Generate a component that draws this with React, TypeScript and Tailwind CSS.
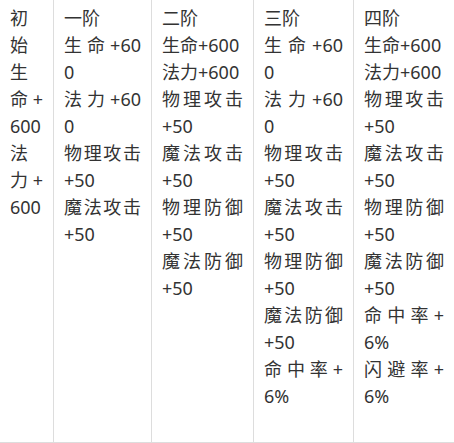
type Line = { text: string; spread?: boolean };

interface Column {
  width: string;
  border: boolean;
  lines: Line[];
}

const j = (text: string): Line => ({ text, spread: true });
const l = (text: string): Line => ({ text });

const columns: Column[] = [
  {
    width: 'w-[54px]',
    border: true,
    lines: [j('初'), j('始'), j('生'), j('命+'), l('600'), j('法'), j('力+'), l('600')],
  },
  {
    width: 'w-[98px]',
    border: true,
    lines: [
      l('一阶'),
      j('生命+60'), l('0'),
      j('法力+60'), l('0'),
      j('物理攻击'), l('+50'),
      j('魔法攻击'), l('+50'),
    ],
  },
  {
    width: 'w-[102px]',
    border: true,
    lines: [
      l('二阶'),
      l('生命+600'),
      l('法力+600'),
      j('物理攻击'), l('+50'),
      j('魔法攻击'), l('+50'),
      j('物理防御'), l('+50'),
      j('魔法防御'), l('+50'),
    ],
  },
  {
    width: 'w-[100px]',
    border: true,
    lines: [
      l('三阶'),
      j('生命+60'), l('0'),
      j('法力+60'), l('0'),
      j('物理攻击'), l('+50'),
      j('魔法攻击'), l('+50'),
      j('物理防御'), l('+50'),
      j('魔法防御'), l('+50'),
      j('命中率+'), l('6%'),
    ],
  },
  {
    width: 'w-[100px]',
    border: false,
    lines: [
      l('四阶'),
      l('生命+600'),
      l('法力+600'),
      j('物理攻击'), l('+50'),
      j('魔法攻击'), l('+50'),
      j('物理防御'), l('+50'),
      j('魔法防御'), l('+50'),
      j('命中率+'), l('6%'),
      j('闪避率+'), l('6%'),
    ],
  },
];

function Cell({ column }: { column: Column }) {
  return (
    <div
      className={`${column.width} shrink-0 pl-[10px] pr-[10px] pt-[5px] ${
        column.border ? 'border-r border-[#dddddd]' : ''
      }`}
    >
      {column.lines.map((line, i) => (
        <div
          key={i}
          className={`whitespace-nowrap ${
            line.spread ? 'text-justify [text-align-last:justify]' : 'text-left'
          }`}
        >
          {line.text}
        </div>
      ))}
    </div>
  );
}

export default function App() {
  return (
    <div className="w-[454px] h-[443px] overflow-hidden bg-white">
      <div
        className="flex h-[443px] border-b border-[#dddddd] text-[18px] leading-[27px] text-[#333333]"
        style={{ fontFamily: '"Noto Sans", "Noto Sans CJK SC", sans-serif' }}
      >
        {columns.map((column, i) => (
          <Cell key={i} column={column} />
        ))}
      </div>
    </div>
  );
}
